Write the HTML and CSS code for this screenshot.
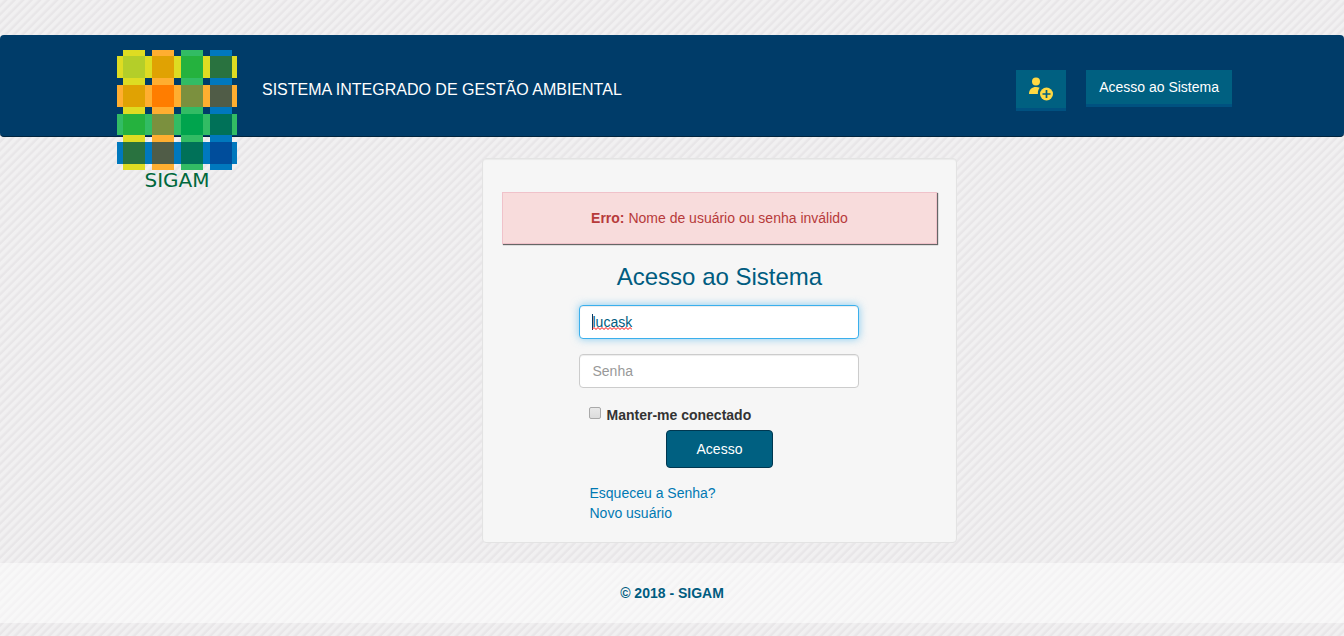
FILE: index.html
```html
<!DOCTYPE html>
<html lang="pt-BR">
<head>
<meta charset="utf-8">
<meta name="viewport" content="width=device-width, initial-scale=1">
<title>SIGAM - Acesso ao Sistema</title>
<link rel="stylesheet" href="styles.css">
</head>
<body>
<header class="navbar">
  <div class="container navbar-inner">
    <a class="brand" href="#" aria-label="SIGAM">
      <svg class="brand-mark" viewBox="0 0 120 120" aria-hidden="true">
        <path fill="#dedc22" d="M0 6h120v22H0z"/>
        <path fill="#ffae30" d="M0 35h120v22H0z"/>
        <path fill="#32bc64" d="M0 64h120v21H0z"/>
        <path fill="#0078bd" d="M0 92h120v22H0z"/>
        <path fill="#dedc22" d="M6 0h22v120H6z"/>
        <path fill="#ffae30" d="M35 0h22v120H35z"/>
        <path fill="#32bc64" d="M64 0h22v120H64z"/>
        <path fill="#0078bd" d="M93 0h22v120H93z"/>
        <path fill="#b4ce29" d="M6 6h22v22H6z"/>
        <path fill="#e0a203" d="M35 6h22v22H35zM6 35h22v22H6z"/>
        <path fill="#25b23e" d="M64 6h22v22H64zM6 64h22v21H6z"/>
        <path fill="#29723f" d="M93 6h22v22H93zM6 92h22v22H6z"/>
        <path fill="#ff7d00" d="M35 35h22v22H35z"/>
        <path fill="#7b903e" d="M64 35h22v22H64zM35 64h22v21H35z"/>
        <path fill="#505c47" d="M93 35h22v22H93zM35 92h22v22H35z"/>
        <path fill="#00a44d" d="M64 64h22v21H64z"/>
        <path fill="#007158" d="M93 64h22v21H93zM64 92h22v22H64z"/>
        <path fill="#004d9b" d="M93 92h22v22H93z"/>
      </svg>
      <span class="brand-name">SIGAM</span>
    </a>
    <span class="system-name">SISTEMA INTEGRADO DE GESTÃO AMBIENTAL</span>
    <nav class="actions">
      <button class="nav-button nav-button-icon" type="button" aria-label="Novo usuário">
        <svg class="user-icon" viewBox="0 0 26 26" aria-hidden="true">
          <circle cx="8" cy="5.500" r="4" fill="#ffd942"/>
          <path d="M1 18C1 13.500 4 11 8 11c1.500 0 2.700.3 3.700.8-1.300 1.500-2 3.500-1.800 6.200z" fill="#ffd942"/>
          <circle cx="18.500" cy="18" r="6.500" fill="#ffd942"/>
          <path d="M18.500 14v8M14.500 18h8" stroke="#006081" stroke-width="1.700"/>
        </svg>
      </button>
      <button class="nav-button" type="button">Acesso ao Sistema</button>
    </nav>
  </div>
</header>
<main class="container">
  <section class="panel">
    <div class="alert" role="alert"><strong>Erro:</strong> Nome de usuário ou senha inválido</div>
    <form class="login">
      <h1 class="title">Acesso ao Sistema</h1>
      <div class="user-row">
        <input class="field field-user" type="text" value="lucask" aria-label="Usuário" spellcheck="false" autofocus>
        <span class="caret"></span>
        <svg class="squiggle" viewBox="0 0 40 3" aria-hidden="true">
          <path d="M0 2.500l2-2 2 2 2-2 2 2 2-2 2 2 2-2 2 2 2-2 2 2 2-2 2 2 2-2 2 2 2-2 2 2 2-2 2 2 2-2 2 2" fill="none" stroke="#f00"/>
        </svg>
      </div>
      <input class="field" type="password" placeholder="Senha" aria-label="Senha">
      <div class="remember">
        <input class="checkbox" type="checkbox" id="remember">
        <label for="remember">Manter-me conectado</label>
      </div>
      <button class="submit" type="submit">Acesso</button>
      <div class="links">
        <a href="#">Esqueceu a Senha?</a>
        <a href="#">Novo usuário</a>
      </div>
    </form>
  </section>
</main>
<footer class="footer">© 2018 - SIGAM</footer>
</body>
</html>
```

FILE: styles.css
```css
* { box-sizing: border-box; }

body {
  margin: 0;
  padding-top: 35px;
  font: 14px/20px "Liberation Sans", Arial, sans-serif;
  color: #333;
  background: repeating-linear-gradient(135deg, #f1f0f1 0, #f1f0f1 2px, #e8e6e8 4px, #e8e6e8 5px, #f1f0f1 6px);
}

button, input { font: inherit; }

.container {
  max-width: 1170px;
  margin: 0 auto;
  padding: 0 15px;
}

.navbar {
  height: 102px;
  background: #003c69;
  border-bottom: 1px solid #00253f;
  border-radius: 4px;
}

.navbar-inner {
  display: flex;
  align-items: flex-start;
  padding: 15px 25px 0 30px;
}

.brand {
  display: flex;
  flex-direction: column;
  align-items: center;
  width: 120px;
  margin-right: 25px;
  text-decoration: none;
  position: relative;
  z-index: 1;
}

.brand-mark {
  display: block;
  width: 120px;
  height: 120px;
}

.brand-name {
  font: 20px/20px "DejaVu Sans", sans-serif;
  color: #00683d;
}

.system-name {
  padding-top: 30px;
  font-size: 16px;
  color: #fff;
}

.actions {
  display: flex;
  align-items: flex-start;
  gap: 20px;
  margin-left: auto;
  padding-top: 20px;
}

.nav-button {
  height: 37px;
  padding: 0 13px;
  color: #fff;
  background: #006081;
  border: 0;
  border-bottom: 3px solid #005180;
}

.nav-button-icon {
  width: 50px;
  height: 41px;
  padding: 0 12px;
}

.user-icon {
  display: block;
  width: 26px;
  height: 26px;
}

.panel {
  width: 41.6667%;
  min-width: 320px;
  margin: 21px 0 20px 33.3333%;
  padding: 33px 19px 19px;
  background: #f6f6f6;
  border: 1px solid #e3e3e3;
  border-radius: 4px;
  box-shadow: inset 0 1px 1px rgba(0, 0, 0, .05);
}

.alert {
  padding: 15px;
  text-align: center;
  color: #b73a3a;
  background: #f8dcdc;
  border: 1px solid #f0c2ca;
  box-shadow: 1px 1px 1px #666;
}

.login {
  display: flex;
  flex-direction: column;
  width: 280px;
  max-width: 100%;
  margin: 0 auto;
}

.title {
  margin: 20px 0 15px;
  font-size: 24px;
  font-weight: 400;
  line-height: 26px;
  text-align: center;
  color: #005c80;
}

.user-row {
  display: flex;
  position: relative;
}

.field {
  width: 100%;
  height: 34px;
  margin-bottom: 15px;
  padding: 6px 12px;
  color: #005c80;
  background: #fff;
  border: 1px solid #ccc;
  border-radius: 4px;
  outline: 0;
  box-shadow: inset 0 1px 1px rgba(0, 0, 0, .075);
}

.field::placeholder { color: #999; }

.field-user { caret-color: transparent; }

.caret {
  position: absolute;
  top: 9px;
  left: 13px;
  width: 1px;
  height: 16px;
  background: #003c69;
}

.squiggle {
  position: absolute;
  top: 22px;
  left: 13px;
  width: 40px;
  height: 3px;
  pointer-events: none;
}

.field:focus {
  border-color: #3bafec;
  box-shadow: inset 0 1px 1px rgba(0, 0, 0, .075), 0 0 8px rgba(59, 175, 236, .6);
}

.remember {
  display: flex;
  gap: 5px;
  margin: 2px 0 5px;
  padding-left: 10px;
  font-weight: 700;
}

.checkbox {
  appearance: none;
  width: 12px;
  height: 12px;
  margin: 2px 0 0;
  background: linear-gradient(#e9e9e9, #dcdcdc);
  border: 1px solid #a9a9a9;
  border-radius: 2px;
}

.checkbox:checked { background: #006081; }

.submit {
  align-self: center;
  width: 107px;
  height: 38px;
  padding: 0;
  color: #fff;
  background: #006081;
  border: 1px solid #003750;
  border-radius: 4px;
}

.links {
  display: flex;
  flex-direction: column;
  align-items: flex-start;
  padding: 15px 10px 0;
}

.links a {
  color: #0079b3;
  text-decoration: none;
}

.footer {
  margin-bottom: 13px;
  padding: 20px 0;
  font-weight: 700;
  text-align: center;
  color: #005c80;
  background: rgba(255, 255, 255, .5);
}
```
